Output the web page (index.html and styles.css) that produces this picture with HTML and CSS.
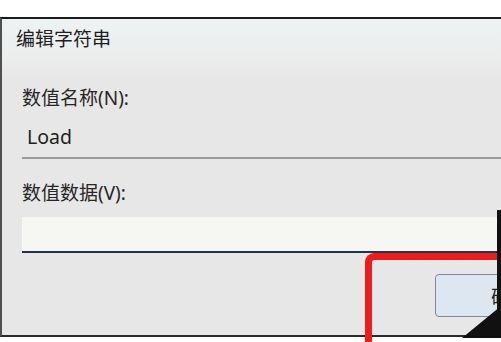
FILE: index.html
```html
<!DOCTYPE html>
<html lang="zh-CN">
<head>
  <meta charset="UTF-8" />
  <title>编辑字符串</title>
  <link rel="stylesheet" href="styles.css">
</head>
<body>
  <div class="dialog">
    <div class="title-bar">编辑字符串</div>

    <div class="form">
      <div class="label">数值名称(N):</div>
      <div class="name-field">Load</div>

      <div class="label label-data">数值数据(V):</div>
      <div class="value-input"></div>
    </div>

    <div class="footer">
      <button class="btn">确定</button>
      <button class="btn">取消</button>
    </div>
  </div>

  <div class="highlight"></div>
  <div class="edge-bar"></div>
  <div class="corner"></div>
</body>
</html>
```

FILE: styles.css
```css
body {
  margin: 0;
  background: #fff;
  font-family: "Noto Sans", "Noto Sans CJK SC", sans-serif;
  color: #1e1e1e;
  overflow: hidden;
}

.dialog {
  margin-top: 17px;
  height: 316px;
  border-top: 2px solid #1c1c1c;
  border-left: 2px solid #505050;
  border-bottom: 2px solid #2c2c2c;
  background: #e7e7e7;
  overflow: hidden;
}

.title-bar {
  height: 46px;
  padding: 10px 0 0 14px;
  font-size: 19px;
  line-height: 20px;
  background: linear-gradient(180deg, #eef2f2 0%, #eceeee 60%, #e8e8e8 100%);
}

.form {
  padding-left: 20px;
}

.label {
  margin-top: 11px;
  font-size: 19px;
  line-height: 24px;
  color: #262626;
}

.label-data {
  margin-top: 22px;
}

.name-field {
  height: 32px;
  padding: 15px 0 0 5px;
  font-size: 19.5px;
  line-height: 24px;
  border-bottom: 2px solid #9a9a9a;
}

.value-input {
  margin-top: 12px;
  margin-right: 3px;
  height: 34px;
  background: #f6f6f3;
  border-bottom: 2px solid #1e3550;
}

.footer {
  display: flex;
  gap: 14px;
  margin-top: 21px;
  padding-left: 433px;
}

.btn {
  flex: none;
  width: 150px;
  height: 43px;
  background: #dce7f1;
  border: 1px solid #7d8b99;
  border-radius: 4px;
  font-family: inherit;
  font-size: 19px;
  color: #222;
}

/* red annotation frame, runs off the right and bottom edges */
.highlight {
  position: absolute;
  left: 365px;
  top: 253px;
  width: 129px;
  height: 82px;
  border-top: 7px solid #ee1d1d;
  border-left: 7px solid #ee1d1d;
  border-top-left-radius: 9px;
}

.edge-bar {
  position: absolute;
  left: 497px;
  top: 210px;
  width: 4px;
  height: 128px;
  background: #111;
}

.corner {
  position: absolute;
  left: 462px;
  top: 306px;
  width: 39px;
  height: 32px;
  background: #111;
  clip-path: polygon(100% 0, 100% 100%, 0 100%);
}
```
